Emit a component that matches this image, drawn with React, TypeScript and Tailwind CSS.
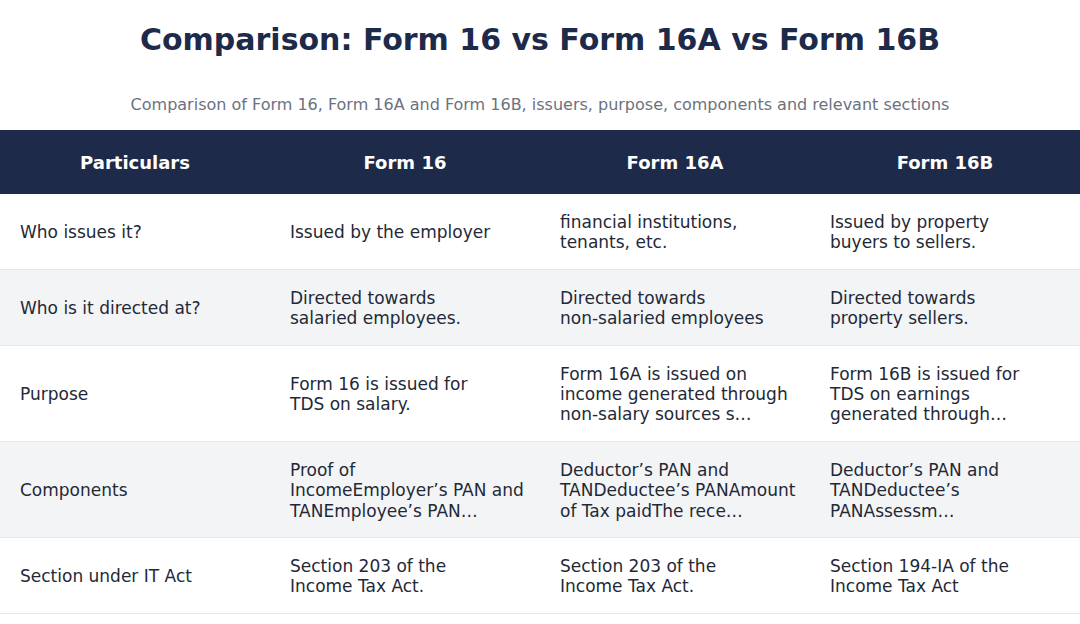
import React from "react";

const rows: { label: string; cells: string[][]; gray: boolean }[] = [
  {
    label: "Who issues it?",
    cells: [["Issued by the employer"], ["financial institutions,", "tenants, etc."], ["Issued by property", "buyers to sellers."]],
    gray: false,
  },
  {
    label: "Who is it directed at?",
    cells: [["Directed towards", "salaried employees."], ["Directed towards", "non-salaried employees"], ["Directed towards", "property sellers."]],
    gray: true,
  },
  {
    label: "Purpose",
    cells: [
      ["Form 16 is issued for", "TDS on salary."],
      ["Form 16A is issued on", "income generated through", "non-salary sources s…"],
      ["Form 16B is issued for", "TDS on earnings", "generated through…"],
    ],
    gray: false,
  },
  {
    label: "Components",
    cells: [
      ["Proof of", "IncomeEmployer’s PAN and", "TANEmployee’s PAN…"],
      ["Deductor’s PAN and", "TANDeductee’s PANAmount", "of Tax paidThe rece…"],
      ["Deductor’s PAN and", "TANDeductee’s", "PANAssessm…"],
    ],
    gray: true,
  },
  {
    label: "Section under IT Act",
    cells: [
      ["Section 203 of the", "Income Tax Act."],
      ["Section 203 of the", "Income Tax Act."],
      ["Section 194-IA of the", "Income Tax Act"],
    ],
    gray: false,
  },
];

export default function App() {
  return (
    <div
      className="w-[1080px] h-[624px] bg-white overflow-hidden"
      style={{ fontFamily: '"DejaVu Sans", "Liberation Sans", sans-serif' }}
    >
      <h1 className="pt-[20px] text-center text-[30px] leading-[40px] font-bold text-[#1e2a4a]">
        Comparison: Form 16 vs Form 16A vs Form 16B
      </h1>
      <p className="mt-[33px] text-center text-[16px] leading-[24px] text-[#6b7280]">
        Comparison of Form 16, Form 16A and Form 16B, issuers, purpose, components and relevant sections
      </p>
      <div className="mt-[13px]">
        <div className="grid grid-cols-4 h-[64px] bg-[#1e2a4a] text-white font-bold text-[18px]">
          {["Particulars", "Form 16", "Form 16A", "Form 16B"].map((h) => (
            <div key={h} className="flex items-center justify-center">
              {h}
            </div>
          ))}
        </div>
        {rows.map((r) => (
          <div
            key={r.label}
            className={`grid grid-cols-4 border-b border-[#e5e7eb] text-[17px] leading-[1.2] text-[#1f2937] ${
              r.gray ? "bg-[#f3f4f6]" : "bg-white"
            }`}
          >
            <div className="px-[20px] pt-[18px] pb-[16px] flex items-center">{r.label}</div>
            {r.cells.map((c, i) => (
              <div key={i} className="px-[20px] pt-[18px] pb-[16px] flex flex-col justify-center">
                {c.map((line, j) => (
                  <span key={j} className="whitespace-nowrap">
                    {line}
                  </span>
                ))}
              </div>
            ))}
          </div>
        ))}
      </div>
    </div>
  );
}
